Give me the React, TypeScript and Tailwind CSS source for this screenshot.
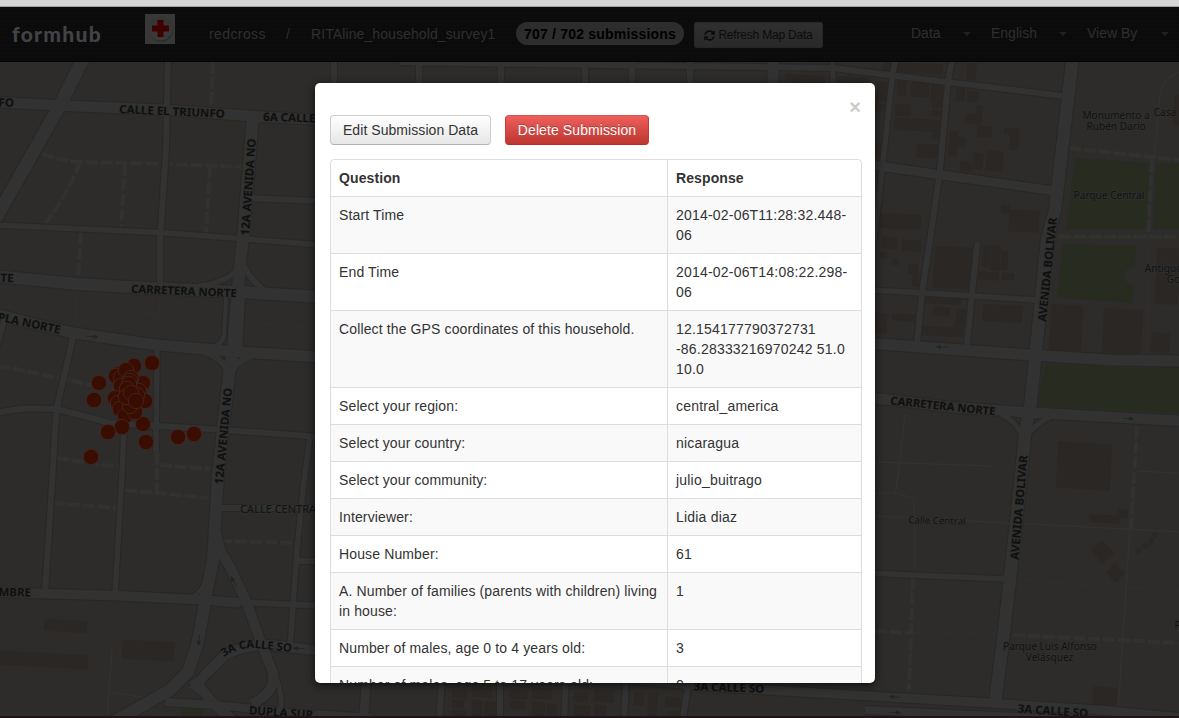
import type { ReactNode } from "react";
import { FaSyncAlt } from "react-icons/fa";

type Road = [d: string, width: number];

const roads: Road[] = [
  ["M85 55L60 105L-4 218", 13],
  ["M-5 102L70 106L170 110L250 116L340 121", 10.5],
  ["M168 55L166 150L160 240L160 285", 6],
  ["M334 55V95", 6],
  ["M253 116L243 237L239 275L233 350L229 375L218 475L213 560L206 595L202 620L197 645L188 672L170 690L110 724", 12],
  ["M248 198L320 201", 6],
  ["M-5 225L160 232.5L240 238.5L320 245", 5.5],
  ["M-5 276L77 284L130 287L240 292L320 297", 12],
  ["M198 286Q222 284 238 270", 5],
  ["M243 264Q252 284 270 294", 6],
  ["M-5 314L35 324L74 333L157 345L240 352L320 357", 11],
  ["M226 296L224 335Q222 345 212 347", 4],
  ["M243 296L240 352", 4],
  ["M203 352Q224 358 229 374", 6],
  ["M252 356Q238 360 229 374", 6],
  ["M5 318L-4 348", 6],
  ["M74 333L57 407L55 430L51 500L45 592", 6],
  ["M-5 413L23 408.500L57 409L110 423L157 426L227 430L320 437", 6],
  ["M157 345L156 452", 5.5],
  ["M124 426L122 475L115 594", 5.5],
  ["M310 437L303 490L297 550L290 648", 5.5],
  ["M214 508H330", 6],
  ["M297 561H330", 6],
  ["M-5 592L125 596L205 600L240 603", 9.5],
  ["M205 601L330 606", 6],
  ["M190 598Q204 592 207 574", 4],
  ["M215 530L221 552L230 567L247 603L260 640L273 673Q276 692 252 704", 10],
  ["M330 652L280 646Q250 642 225 655L205 675L193 690", 10],
  ["M193 680L215 705L235 722", 10],
  ["M165 702L215 705L255 709L330 717", 8],
  ["M276 678Q282 690 281 712", 5],
  ["M400 62L600 65L833 68L880 74L1063 96", 6],
  ["M419 60V100", 6],
  ["M501 60V100", 6],
  ["M585 60V100", 6],
  ["M632 60V100", 6],
  ["M690 60V100", 6],
  ["M773 60V100", 11],
  ["M833 60V100", 5],
  ["M896 55L892 80L882 170L874 240", 5.5],
  ["M953 55L948 82L940 170L930 240L922 293L917 344", 6],
  ["M865 164L942 175L1055 191", 9],
  ["M1073 55L1055 210L1047 240L1038 330L1031 400L1025 435L1021 475L1011 570L1003 640L995 704", 12.5],
  ["M870 290L925 293L1037 300", 5.5],
  ["M977.500 242L972 293L967 346", 6],
  ["M865 343L1030 355L1110 360L1185 361", 11],
  ["M865 397L950 407L1020 412L1185 421", 10.500],
  ["M1000 414Q1016 420 1023 438", 5],
  ["M1050 417Q1035 424 1025 438", 5],
  ["M865 573L1005 579", 5.500],
  ["M600 676L700 686L870 696L990 703L1100 710L1185 718", 9],
  ["M865 710L1060 719", 8],
  ["M315 678L600 680", 8],
  ["M367 675L363 725", 9],
  ["M442 675L439 725", 6],
  ["M500 675V725", 6],
  ["M566 675L564 725", 6],
  ["M626 675L624 725", 6],
  ["M688 685L682 725", 6],
  ["M315 714L372 718", 8],
];

const lanes = [
  "M875 516L1185 532",
  "M900 470L895 493L914 498L915 572",
  "M875 493.500L895 493",
  "M1130 528L1118 712",
  "M905 414L896 490",
  "M875 462L992 466",
  "M1179 72Q1163 78 1160 95L1154 157",
  "M112 650L107 718",
  "M110 692L157 700",
  "M1137 471L1179 473",
];

const dashed = [
  "M213 62L211 110",
  "M42 153Q54 160 80 162L167 164L242 167",
  "M80 162Q70 190 46 223",
  "M125 164L121 229",
  "M210 167L206 234",
  "M81 233L78 280",
  "M-2 366L17 369L100 387",
  "M57 458L118 467",
  "M157 453V493",
  "M160 465L210 469",
  "M53 503L117 508",
  "M125 490L208 498",
  "M220 541L295 543",
  "M1137 427L1131 528",
  "M1059 236.500H1179",
  "M875 631L910 633",
  "M913 578L909 690",
  "M1013 635L1179 643",
  "M1069 148L1179 160",
  "M1152 160L1148 236",
];

const dotted = [
  "M77 286L75 325", "M160 290L157 335", "M77 305L160 314", "M250 323L315 328",
  "M1055 300L1179 309", "M1149 238L1147 355", "M1020 580L1179 591", "M912 633L1000 634",
];

type Box = [number, number, number, number];

const buildings: Box[] = [
  [44, 620, 43, 12], [0, 653, 88, 14], [122, 641, 52, 19],
  [883, 63, 60, 10], [967, 63, 9, 17], [877, 82, 11, 20],
  [897, 81, 9, 15], [911, 83, 18, 14], [931, 85, 14, 17], [895, 104, 16, 12],
  [932, 102, 11, 6], [932, 110, 10, 6], [894, 119, 50, 12], [932, 131, 10, 8],
  [917, 144, 22, 14], [956, 88, 9, 13], [967, 91, 12, 11], [976, 106, 6, 15],
  [965, 114, 16, 10], [977, 126, 15, 11], [949, 131, 8, 25], [957, 137, 8, 10],
  [1004, 128, 15, 7], [1010, 134, 9, 16], [973, 153, 10, 16], [986, 151, 17, 20],
  [960, 161, 12, 10], [875, 104, 12, 7], [875, 143, 7, 14],
  [880, 214, 41, 15], [1009, 210, 30, 22], [1001, 205, 9, 8],
  [882, 237, 15, 12], [902, 240, 19, 11], [880, 252, 7, 7], [892, 259, 7, 6],
  [908, 264, 10, 10], [912, 274, 7, 12], [934, 247, 39, 42],
  [982, 245, 8, 22], [991, 245, 9, 26], [1001, 251, 7, 19], [979, 272, 20, 8], [1002, 273, 12, 7],
  [875, 313, 12, 20], [892, 314, 23, 7], [925, 297, 36, 7], [933, 307, 17, 9],
  [921, 327, 42, 9], [956, 309, 9, 18], [983, 305, 39, 17],
  [1050, 305, 32, 48], [1103, 309, 39, 45], [1151, 333, 19, 20], [1156, 248, 23, 56],
  [1057, 443, 54, 46], [1090, 515, 30, 8], [1117, 509, 11, 9], [1093, 687, 24, 21],
  [1174, 95, 6, 30], [785, 75, 40, 8], [838, 77, 30, 6],
  [452, 690, 15, 8], [452, 700, 12, 8], [452, 710, 14, 8], [472, 688, 20, 9], [472, 700, 10, 18], [484, 702, 12, 16],
  [510, 690, 18, 9], [510, 701, 15, 8], [532, 688, 20, 11], [532, 702, 13, 16], [547, 704, 10, 14],
  [574, 692, 14, 10], [574, 705, 16, 12], [594, 690, 20, 12], [594, 705, 12, 13],
  [634, 693, 10, 12], [648, 693, 9, 24], [665, 697, 16, 10], [668, 711, 12, 7],
];

const blockShapes = [
  "M1075 158L1150 163L1147 229L1066 229Z",
  "M1156 163H1179V229H1153Z",
  "M1063 244L1136 246L1133 303L1057 297Z",
  "M1045 364L1137 368L1179 367V413L1037 406Z",
  "M181 709H203V718H181Z",
];

const markers: [number, number][] = [
  [152, 363], [134, 366], [119, 374], [116, 376], [121, 378], [99, 383], [94, 400],
  [143, 383], [121, 386], [139, 391], [115, 398], [118, 403], [145, 401], [120, 409],
  [125, 416], [122, 427], [108, 432], [143, 424], [135, 412], [130, 406], [146, 442],
  [178, 437], [194, 434], [91, 457], [126, 370], [131, 378], [130, 381], [129, 384],
  [137, 395], [127, 389], [126, 397], [131, 393], [136, 401],
];

function MapLabel({ x, y, r = 0, size = 11.5, bold = true, children }: {
  x: number; y: number; r?: number; size?: number; bold?: boolean; children: ReactNode;
}) {
  return (
    <text
      transform={`translate(${x} ${y}) rotate(${r})`}
      textAnchor="middle"
      dominantBaseline="central"
      fontSize={size}
      fontWeight={bold ? 700 : 400}
      fill={bold ? "#101010" : "#121212"}
      stroke="#2f2f2e"
      strokeWidth={1.5}
      paintOrder="stroke"
    >
      {children}
    </text>
  );
}

function Arrow({ x, y, r }: { x: number; y: number; r: number }) {
  return (
    <path
      transform={`translate(${x} ${y}) rotate(${r})`}
      d="M-5.500 0H3M1.500 -1.500L5.500 0L1.500 1.500Z"
      stroke="#202423"
      strokeWidth="0.900"
      fill="#202423"
    />
  );
}

function CityMap() {
  return (
    <svg width="1179" height="718" viewBox="0 0 1179 718" className="block font-['Noto_Sans','Open_Sans',sans-serif]">
      <rect width="1179" height="718" fill="#2d2c2a" />
      {blockShapes.map((d) => <path key={d} d={d} fill="#282b20" />)}
      {buildings.map(([x, y, w, h]) => (
        <rect key={`${x}-${y}`} x={x} y={y} width={w} height={h} fill="#2b2725" transform={`rotate(3 ${x + w / 2} ${y + h / 2})`} />
      ))}
      <g fill="#2b2725">
        <path d="M1091 550L1102 540L1114 553L1102 564Z" />
        <path d="M1106 573L1115 563L1124 573L1116 583Z" />
        <path d="M1136 552L1150 543L1156 533" fill="none" stroke="#2b2725" strokeWidth="5" strokeDasharray="6 2" />
      </g>
      <circle cx="1133" cy="276" r="9" fill="#2d2c2a" />
      <g fill="none" stroke="#313130" strokeWidth="4" strokeDasharray="12 3">
        {dashed.map((d) => <path key={d} d={d} />)}
      </g>
      <g fill="none" stroke="#323231" strokeWidth="1" strokeDasharray="1.500 2">
        {dotted.map((d) => <path key={d} d={d} />)}
      </g>
      <g fill="none" stroke="#313130" strokeWidth="1.500">
        {lanes.map((d) => <path key={d} d={d} />)}
      </g>
      <g fill="none" stroke="#282725" strokeLinejoin="round">
        {roads.map(([d, w]) => <path key={d} d={d} strokeWidth={w + 2} />)}
      </g>
      <g fill="none" stroke="#323232" strokeLinejoin="round">
        {roads.map(([d, w]) => <path key={d} d={d} strokeWidth={w} />)}
      </g>
      <Arrow x={92} y={336.5} r={4} />
      <Arrow x={942} y={347} r={183} />
      <Arrow x={1128} y={418.5} r={2} />
      <Arrow x={234} y={582} r={242} />
      <Arrow x={199} y={640} r={95} />
      <Arrow x={299} y={648.5} r={182} />
      <Arrow x={895} y={697} r={182} />
      <Arrow x={895} y={712.5} r={2} />
      <MapLabel x={1.5} y={102} r={2}>NFO</MapLabel>
      <MapLabel x={172} y={111} r={2.5}>CALLE EL TRIUNFO</MapLabel>
      <MapLabel x={300} y={117.5} r={2}>6A CALLE NO</MapLabel>
      <MapLabel x={248} y={187} r={-86}>12A AVENIDA NO</MapLabel>
      <MapLabel x={-6} y={277} r={2}>NORTE</MapLabel>
      <MapLabel x={184} y={290.500} r={2.500} size={11.3}>CARRETERA NORTE</MapLabel>
      <MapLabel x={21} y={321} r={12}>DUPLA NORTE</MapLabel>
      <MapLabel x={223} y={436} r={-84.500}>12A AVENIDA NO</MapLabel>
      <MapLabel x={281} y={508} size={11} bold={false}>CALLE CENTRAL</MapLabel>
      <MapLabel x={-4} y={591.500} r={1}>SEPTIEMBRE</MapLabel>
      <path id="loop-label" d="M224 657Q236 648 254 648L292 652" fill="none" />
      <text fontSize="11.300" fontWeight="700" fill="#101010">
        <textPath href="#loop-label">3A CALLE SO</textPath>
      </text>
      <MapLabel x={281} y={712} r={4}>DUPLA SUR</MapLabel>
      <MapLabel x={729} y={687} r={2}>3A CALLE SO</MapLabel>
      <MapLabel x={943} y={405.500} r={6} size={11.3}>CARRETERA NORTE</MapLabel>
      <MapLabel x={1047} y={269.500} r={-84}>AVENIDA BOLIVAR</MapLabel>
      <MapLabel x={1018.500} y={507.500} r={-85}>AVENIDA BOLIVAR</MapLabel>
      <MapLabel x={1053} y={710.5} r={4}>3A CALLE SO</MapLabel>
      <MapLabel x={1116} y={114.500} size={10.1} bold={false}>Monumento a</MapLabel>
      <MapLabel x={1116} y={125.500} size={10.1} bold={false}>Rubén Darío</MapLabel>
      <MapLabel x={1165} y={111.500} size={10.1} bold={false}>Casa</MapLabel>
      <MapLabel x={1109} y={194.500} size={10.1} bold={false}>Parque Central</MapLabel>
      <MapLabel x={1163.5} y={267.500} size={10.1} bold={false}>Antiguo</MapLabel>
      <MapLabel x={1178} y={278.500} size={10.1} bold={false}>Gobi</MapLabel>
      <MapLabel x={937} y={520.500} r={1.5} size={9.7} bold={false}>Calle Central</MapLabel>
      <MapLabel x={1050} y={645.500} size={10.1} bold={false}>Parque Luis Alfonso</MapLabel>
      <MapLabel x={1049.500} y={656.500} size={10.1} bold={false}>Velásquez</MapLabel>
      <MapLabel x={1177.5} y={624.500} size={10.1} bold={false}>P</MapLabel>
      {markers.map(([x, y]) => (
        <circle key={`${x}-${y}`} cx={x} cy={y} r="7.700" fill="#3a0d03" stroke="#44291f" strokeWidth="0.800" />
      ))}
    </svg>
  );
}

function RedCrossLogo() {
  return (
    <svg width="30" height="30" viewBox="0 0 30 30" className="block">
      <defs>
        <linearGradient id="disc" x1="0" y1="0" x2="0" y2="1">
          <stop offset="0" stopColor="#343434" />
          <stop offset="1" stopColor="#3b3b3b" />
        </linearGradient>
      </defs>
      <rect width="30" height="30" fill="#383838" />
      <circle cx="16" cy="15.500" r="12.200" fill="#2b2b2b" />
      <circle cx="15.500" cy="14.500" r="12" fill="url(#disc)" />
      <path d="M12.500 6H18.500V11.500H24V17.500H18.500V23H12.500V17.500H7V11.500H12.500Z" fill="#3f0000" />
    </svg>
  );
}

const menus = [
  { label: "Data", gap: "w-[80px]" },
  { label: "English", gap: "w-[96px]" },
  { label: "View By", gap: "w-[82px]" },
];

function Header() {
  return (
    <header className="flex h-[55px] items-start border-b border-[#050505] bg-[#0b0b0b] bg-[radial-gradient(#0d0d0d_1px,transparent_1px)] bg-[length:4px_4px] text-[14px] text-[#2f2f2f]">
      <div className="ml-[12px] mt-[13px] w-[133px] font-['Lato','Liberation_Sans',sans-serif] text-[21px] font-black leading-[28px] tracking-[1.3px] text-[#434347]">
        formhub
      </div>
      <div className="mt-[7px]"><RedCrossLogo /></div>
      <div className="ml-[34px] mt-[17px] flex w-[307px] whitespace-pre leading-[20px] tracking-[0.1px]">
        <span className="w-[77px] tracking-[0.4px]">redcross</span>
        <span className="w-[25px]">/</span>
        <span>RITAline_household_survey1</span>
      </div>
      <div className="mt-[15px] flex h-[23px] w-[168px] items-center justify-center whitespace-nowrap rounded-full bg-[#2d2d2d] pt-px text-[14px] font-bold tracking-[0.2px] text-black">
        707 / 702 submissions
      </div>
      <div className="ml-[10px] mt-[15px] flex h-[26px] w-[129px] items-center justify-center gap-[3px] whitespace-nowrap rounded-[2px] border border-[#262626] bg-[linear-gradient(#2f2f2f,#292929)] text-[12px] tracking-[-0.2px] text-[#0b0b0b]">
        <FaSyncAlt size={11} />
        Refresh Map Data
      </div>
      <nav className="ml-[88px] mt-[16px] flex leading-[20px]">
        {menus.map((m) => (
          <div key={m.label} className={`whitespace-nowrap ${m.gap}`}>{m.label}</div>
        ))}
      </nav>
    </header>
  );
}

const carets = ["left-[963px]", "left-[1059px]", "left-[1161px]"];

const answers: [string, ReactNode][] = [
  ["Start Time", <>2014-02-06T11:28:32.448-<br />06</>],
  ["End Time", <>2014-02-06T14:08:22.298-<br />06</>],
  ["Collect the GPS coordinates of this household.", <>12.154177790372731<br />-86.28333216970242 51.0<br />10.0</>],
  ["Select your region:", "central_america"],
  ["Select your country:", "nicaragua"],
  ["Select your community:", "julio_buitrago"],
  ["Interviewer:", "Lidia diaz"],
  ["House Number:", "61"],
  ["A. Number of families (parents with children) living in house:", "1"],
  ["Number of males, age 0 to 4 years old:", "3"],
  ["Number of males, age 5 to 17 years old:", "0"],
];

function SubmissionModal() {
  return (
    <section className="h-[600px] w-[560px] overflow-hidden rounded-[5px] bg-white pl-[15px] pr-[13px] text-[14px] leading-[20px] text-[#333] shadow-[0_2px_8px_rgba(0,0,0,0.7)]">
      <div className="flex h-[32px] justify-end pt-[14px]">
        <button className="mr-[1px] h-[18px] text-[20px] font-bold leading-[20px] text-[#ccc]">×</button>
      </div>
      <div className="flex gap-[14px]">
        <button className="h-[30px] w-[161px] whitespace-nowrap rounded-[4px] border border-[#ccc] border-b-[#b3b3b3] bg-[linear-gradient(#fff,#e6e6e6)] tracking-[0.06px]">
          Edit Submission Data
        </button>
        <button className="h-[30px] w-[144px] whitespace-nowrap rounded-[4px] border border-[#c43c35] border-b-[#b0302b] border-t-[#d9534f] bg-[linear-gradient(#ee5f5b,#bd362f)] tracking-[0.1px] text-white [text-shadow:0_-1px_0_rgba(0,0,0,0.25)]">
          Delete Submission
        </button>
      </div>
      <div className="mt-[14px] rounded-[4px] border border-[#ddd]">
        <div className="grid grid-cols-[336px_1fr] font-bold tracking-[0.1px]">
          <div className="p-[8px]">Question</div>
          <div className="border-l border-[#ddd] p-[8px]">Response</div>
        </div>
        {answers.map(([question, response]) => (
          <div key={question} className="grid grid-cols-[336px_1fr] border-t border-[#ddd] even:bg-[#f9f9f9]">
            <div className="py-[8px] pl-[8px] pr-[4px] tracking-[0.13px]">{question}</div>
            <div className="whitespace-nowrap border-l border-[#ddd] p-[8px] tracking-[0.2px]">{response}</div>
          </div>
        ))}
      </div>
    </section>
  );
}

export default function App() {
  return (
    <div className="relative h-[718px] w-[1179px] overflow-hidden bg-[#2d2c2a] font-['Liberation_Sans',Arial,sans-serif]">
      <div className="absolute inset-0"><CityMap /></div>
      <div className="relative flex h-full flex-col">
        <div className="h-[7px] shrink-0 border-b border-[#a5a5a5] bg-[#d6d6d6]" />
        <Header />
        <main className="flex flex-1 items-start justify-center pl-[11px] pt-[21px]">
          <SubmissionModal />
        </main>
        <div className="h-[2px] bg-[#1f1519]" />
      </div>
      {carets.map((left) => (
        <span key={left} className={`absolute top-[32px] border-x-4 border-t-4 border-x-transparent border-t-[#202020] ${left}`} />
      ))}
    </div>
  );
}
